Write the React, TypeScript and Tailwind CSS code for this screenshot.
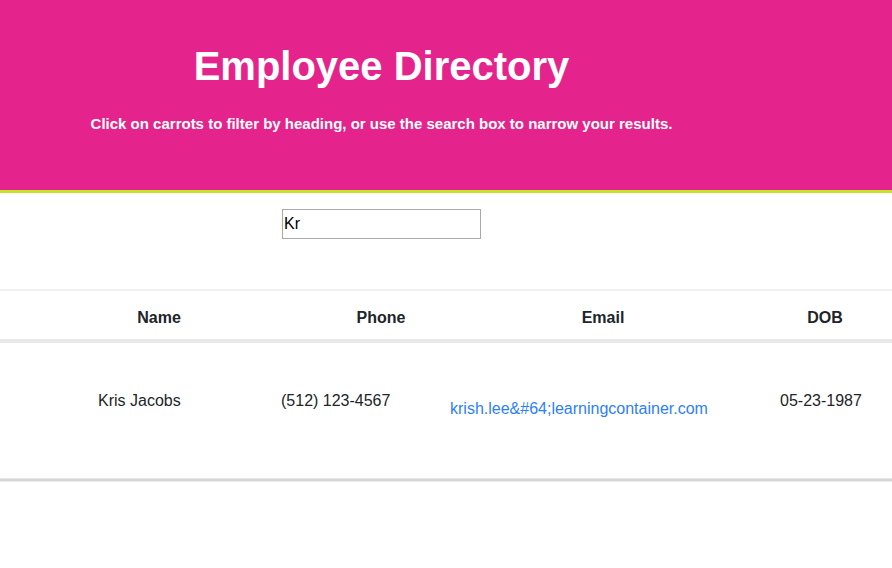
export default function App() {
  return (
    <div className="w-[892px] h-[568px] overflow-hidden bg-white" style={{ fontFamily: '"Liberation Sans", Arial, sans-serif' }}>
      <header className="bg-[#e4248c] h-[193px] border-b-[3px] border-[#c8e02a]">
        <div className="w-[763px] flex flex-col items-center text-white">
          <h1 className="mt-[42px] text-[40px] leading-[48px] font-bold">Employee Directory</h1>
          <p className="mt-[25px] text-[15px] leading-[18px] font-bold">
            Click on carrots to filter by heading, or use the search box to narrow your results.
          </p>
        </div>
      </header>
      <div className="w-[763px] flex justify-center pt-[16px]">
        <input
          readOnly
          value="Kr"
          className="w-[199px] h-[30px] border border-[#a9a9a9] px-[1px] text-[16px] text-black outline-none"
          style={{ fontFamily: '"Liberation Sans", Arial, sans-serif' }}
        />
      </div>
      <div className="mt-[50px] border-t-2 border-[#f0f0f0]">
        <div className="flex h-[48px] items-center pt-[5px] pl-[48px] font-bold text-[16px] text-[#212529] whitespace-nowrap">
          <div className="w-[222px] shrink-0 text-center">Name</div>
          <div className="w-[222px] shrink-0 text-center">Phone</div>
          <div className="w-[222px] shrink-0 text-center">Email</div>
          <div className="w-[222px] shrink-0 text-center">DOB</div>
        </div>
        <div className="h-[4px] bg-[#e9e9e9]" />
        <div className="flex h-[135px] text-[16px] text-[#212529] whitespace-nowrap">
          <div className="w-[98px] shrink-0" />
          <div className="w-[183px] shrink-0 pt-[46px]">Kris Jacobs</div>
          <div className="w-[169px] shrink-0 pt-[46px]">(512) 123-4567</div>
          <div className="w-[330px] shrink-0 pt-[54px] text-[#2d7ff9]">krish.lee&amp;#64;learningcontainer.com</div>
          <div className="shrink-0 pt-[46px]">05-23-1987</div>
        </div>
        <div className="h-[1px] bg-[#e6e6e6]" />
        <div className="h-[2px] bg-[#d6d6d6]" />
        <div className="h-[1px] bg-[#ececec]" />
      </div>
    </div>
  );
}
